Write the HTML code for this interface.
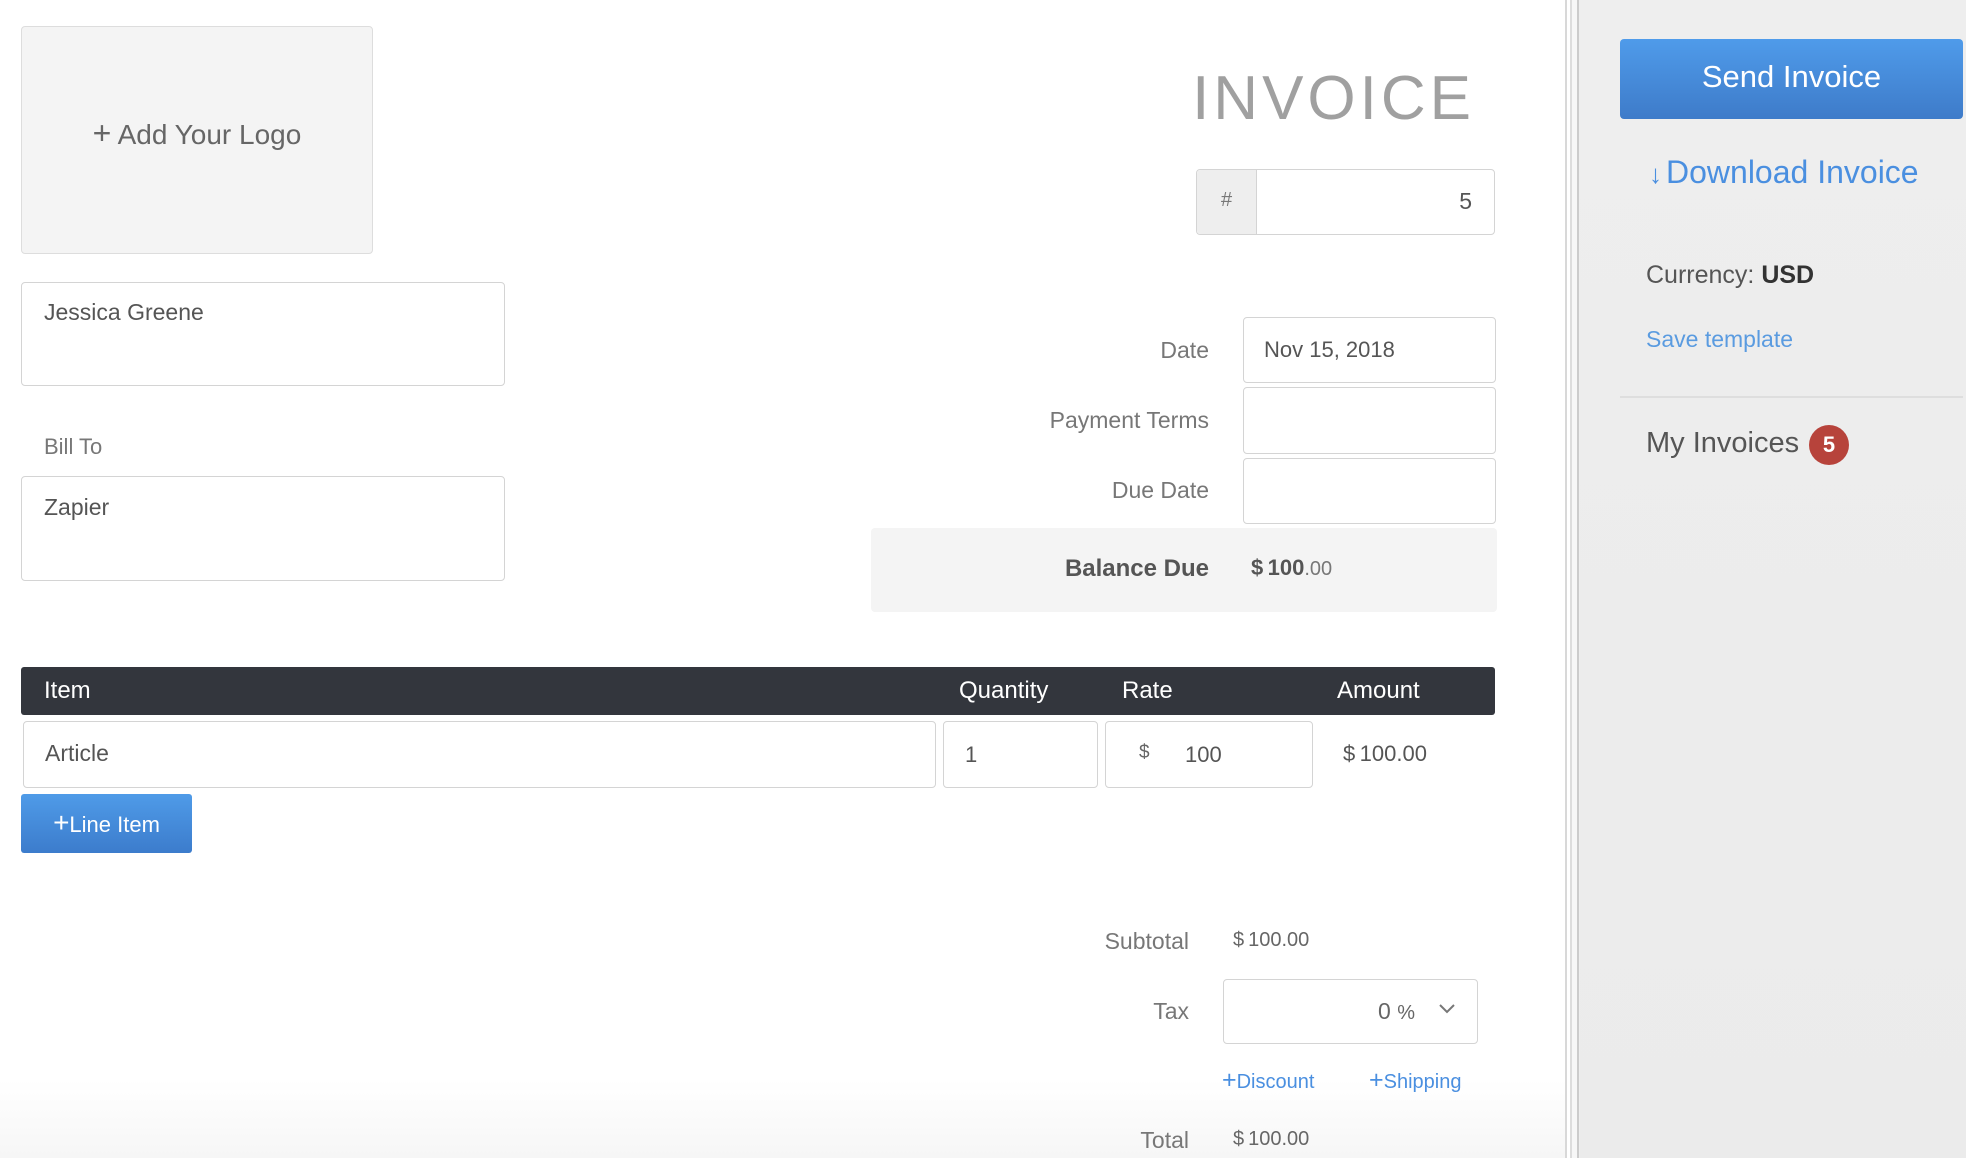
<!DOCTYPE html>
<html><head><meta charset="utf-8"><style>
*{box-sizing:border-box;margin:0;padding:0}
body{width:1966px;height:1158px;position:relative;overflow:hidden;background:#fff;font-family:"Liberation Sans",sans-serif;color:#555}
.a{position:absolute}
.box{position:absolute;border:1.5px solid #d4d4d4;border-radius:4px;background:#fff}
.lbl{position:absolute;font-size:23px;color:#777;text-align:right;line-height:26px}
.blue{color:#4a8fe0}
</style></head><body>
<div class="a" style="left:0;top:1080px;width:1565px;height:78px;background:linear-gradient(#fff,#f6f6f6)"></div>
<div class="box" style="left:21px;top:26px;width:352px;height:228px;background:#f4f4f4;border-color:#ddd"></div>
<div class="a" style="left:21px;top:116px;width:352px;text-align:center;font-size:28px;color:#666;line-height:34px"><span style="font-size:32px">+</span> Add Your Logo</div>
<div class="a" style="left:1100px;top:64px;width:375px;text-align:right;font-size:62px;color:#a0a0a0;letter-spacing:4px;line-height:70px">INVOICE</div>
<div class="box" style="left:1196px;top:169px;width:299px;height:66px"></div>
<div class="a" style="left:1197px;top:170px;width:60px;height:64px;background:#eee;border-right:1.5px solid #d4d4d4;border-radius:4px 0 0 4px;text-align:center;line-height:60px;font-size:20px;color:#777">#</div>
<div class="a" style="left:1260px;top:188px;width:212px;text-align:right;font-size:23px;color:#555">5</div>
<div class="box" style="left:21px;top:282px;width:484px;height:104px"></div>
<div class="a" style="left:44px;top:299px;font-size:23px;color:#555">Jessica Greene</div>
<div class="a" style="left:44px;top:434px;font-size:22px;color:#777">Bill To</div>
<div class="box" style="left:21px;top:476px;width:484px;height:105px"></div>
<div class="a" style="left:44px;top:494px;font-size:23px;color:#555">Zapier</div>
<div class="lbl" style="left:900px;top:337px;width:309px">Date</div>
<div class="box" style="left:1243px;top:317px;width:253px;height:66px"></div>
<div class="a" style="left:1264px;top:337px;font-size:22px;color:#555">Nov 15, 2018</div>
<div class="lbl" style="left:900px;top:407px;width:309px">Payment Terms</div>
<div class="box" style="left:1243px;top:387px;width:253px;height:67px"></div>
<div class="lbl" style="left:900px;top:477px;width:309px">Due Date</div>
<div class="box" style="left:1243px;top:458px;width:253px;height:66px"></div>
<div class="a" style="left:871px;top:528px;width:626px;height:84px;background:#f4f4f4;border-radius:4px"></div>
<div class="lbl" style="left:900px;top:556px;width:309px;font-weight:bold;color:#555;font-size:24px">Balance Due</div>
<div class="a" style="left:1251px;top:555px;font-size:22px;color:#555"><b>$&thinsp;100</b><span style="font-size:20px;color:#777">.00</span></div>
<div class="a" style="left:21px;top:667px;width:1474px;height:48px;background:#33363d;border-radius:3px;color:#fff;font-size:24px;line-height:48px">
<span class="a" style="left:23px">Item</span><span class="a" style="left:938px">Quantity</span><span class="a" style="left:1101px">Rate</span><span class="a" style="left:1316px">Amount</span></div>
<div class="box" style="left:23px;top:721px;width:913px;height:67px"></div>
<div class="a" style="left:45px;top:740px;font-size:23px;color:#555">Article</div>
<div class="box" style="left:943px;top:721px;width:155px;height:67px"></div>
<div class="a" style="left:965px;top:742px;font-size:22px;color:#555">1</div>
<div class="box" style="left:1105px;top:721px;width:208px;height:67px"></div>
<div class="a" style="left:1139px;top:742px;font-size:19px;color:#666">$</div>
<div class="a" style="left:1185px;top:742px;font-size:22px;color:#555">100</div>
<div class="a" style="left:1343px;top:741px;font-size:22px;color:#555">$&thinsp;100.00</div>
<div class="a" style="left:21px;top:794px;width:171px;height:59px;background:linear-gradient(#4f9be8,#3c7ccc);border-radius:3px;color:#fff;font-size:22px;line-height:57px;text-align:center"><span style="font-size:28px">+</span>Line Item</div>
<div class="lbl" style="left:880px;top:928px;width:309px">Subtotal</div>
<div class="a" style="left:1233px;top:929px;font-size:20px;color:#666">$&thinsp;100.00</div>
<div class="lbl" style="left:900px;top:998px;width:289px">Tax</div>
<div class="box" style="left:1223px;top:979px;width:255px;height:65px"></div>
<div class="a" style="left:1378px;top:998px;font-size:23px;color:#666">0 <span style="font-size:20px">%</span></div>
<svg class="a" style="left:1438px;top:1003px" width="18" height="12"><path d="M2 2l7 7 7-7" stroke="#777" stroke-width="2" fill="none"/></svg>
<div class="a blue" style="left:1222px;top:1066px;font-size:20px"><span style="font-size:25px">+</span>Discount</div>
<div class="a blue" style="left:1369px;top:1066px;font-size:20px"><span style="font-size:25px">+</span>Shipping</div>
<div class="lbl" style="left:900px;top:1127px;width:289px">Total</div>
<div class="a" style="left:1233px;top:1128px;font-size:20px;color:#666">$&thinsp;100.00</div>
<div class="a" style="left:1565px;top:0;width:15px;height:1158px;background:linear-gradient(90deg,#d8d8d8 0,#d8d8d8 2px,#fff 2px,#fff 5px,#ddd 5px,#ddd 7px,#f7f7f7 7px,#f7f7f7 12px,#ccc 12px,#ccc 14px,#eee 14px)"></div>
<div class="a" style="left:1580px;top:0;width:386px;height:1158px;background:linear-gradient(#eeeeee,#ebebeb)"></div>
<div class="a" style="left:1620px;top:39px;width:343px;height:80px;background:linear-gradient(#4f9bea,#3e7bc9);border-radius:4px;color:#fff;font-size:31px;line-height:76px;text-align:center">Send Invoice</div>
<div class="a blue" style="left:1649px;top:154px;font-size:32px"><span style="font-size:26px;font-weight:bold;margin-right:4px">&#8595;</span>Download Invoice</div>
<div class="a" style="left:1646px;top:261px;font-size:25px;color:#555">Currency: <b style="color:#333">USD</b></div>
<div class="a blue" style="left:1646px;top:326px;font-size:23px;color:#5a9be0">Save template</div>
<div class="a" style="left:1620px;top:396px;width:343px;height:2px;background:#dedede"></div>
<div class="a" style="left:1646px;top:427px;font-size:29px;color:#555">My Invoices</div>
<div class="a" style="left:1809px;top:425px;width:40px;height:40px;border-radius:50%;background:#b7433b;color:#fff;font-weight:bold;font-size:22px;text-align:center;line-height:40px">5</div>
</body></html>
